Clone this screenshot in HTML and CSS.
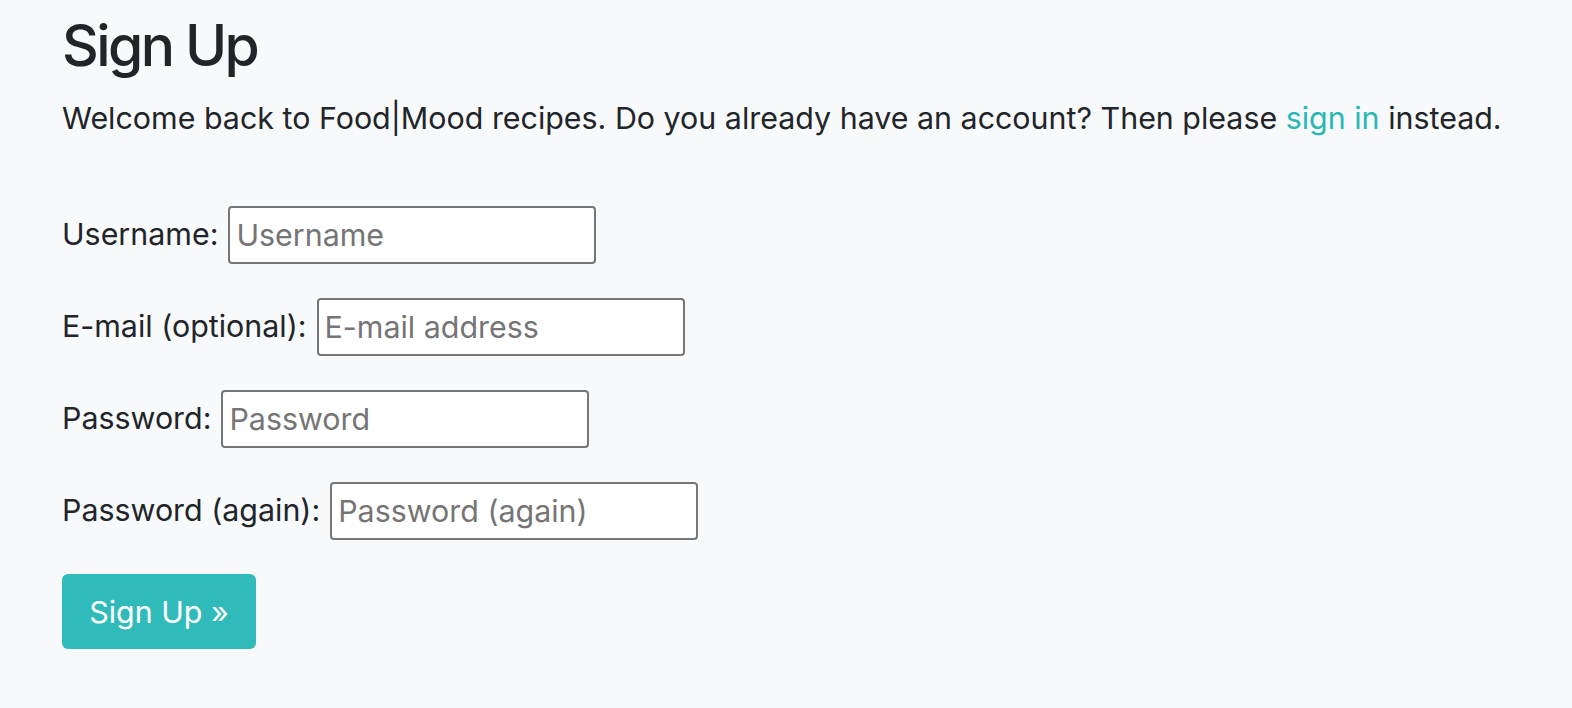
FILE: index.html
```html
<!DOCTYPE html>
<html lang="en">
<head>
<meta charset="utf-8">
<title>Sign Up</title>
<link rel="stylesheet" href="styles.css">
</head>
<body>
<main class="page">
  <h1 class="title">Sign Up</h1>
  <p class="intro">Welcome back to Food|Mood recipes. Do you already have an account? Then please <a href="#" class="link">sign in</a> instead.</p>
  <form class="form">
    <div class="row"><label class="label" for="u">Username:</label><input class="field" id="u" type="text" placeholder="Username"></div>
    <div class="row"><label class="label" for="e">E-mail (optional):</label><input class="field" id="e" type="email" placeholder="E-mail address"></div>
    <div class="row"><label class="label" for="p1">Password:</label><input class="field" id="p1" type="password" placeholder="Password"></div>
    <div class="row"><label class="label" for="p2">Password (again):</label><input class="field" id="p2" type="password" placeholder="Password (again)"></div>
    <button class="btn" type="submit">Sign Up »</button>
  </form>
</main>
</body>
</html>
```

FILE: styles.css
```css
html, body {
  margin: 0;
  padding: 0;
}
body {
  background: #f8f9fa;
  color: #212529;
  font-family: Inter, "Noto Sans", sans-serif;
  font-size: 30.4px;
  line-height: 1.5;
}
.page {
  padding: 12px 62px 0;
}
.title {
  margin: 0 0 16px;
  font-size: 57px;
  font-weight: 500;
  letter-spacing: -2.6px;
  line-height: 1.2;
}
.intro {
  margin: 0 0 64px;
}
.link {
  color: #2ab8b6;
  text-decoration: none;
}
.form {
  display: flex;
  flex-direction: column;
  align-items: flex-start;
  gap: 34px;
}
.row {
  display: flex;
  align-items: center;
  gap: 10px;
}
.field {
  box-sizing: border-box;
  width: 368px;
  height: 58px;
  padding: 0 6px;
  border: 2px solid #767676;
  border-radius: 4px;
  background: #fff;
  font-family: Inter, "Noto Sans", sans-serif;
  font-size: 30.4px;
  color: #212529;
}
.field::placeholder {
  color: #757575;
}
.btn {
  box-sizing: border-box;
  width: 194px;
  height: 75px;
  border: none;
  border-radius: 6px;
  background: #31baba;
  color: #fff;
  font-family: Inter, "Noto Sans", sans-serif;
  font-size: 30.4px;
  cursor: pointer;
}
```
